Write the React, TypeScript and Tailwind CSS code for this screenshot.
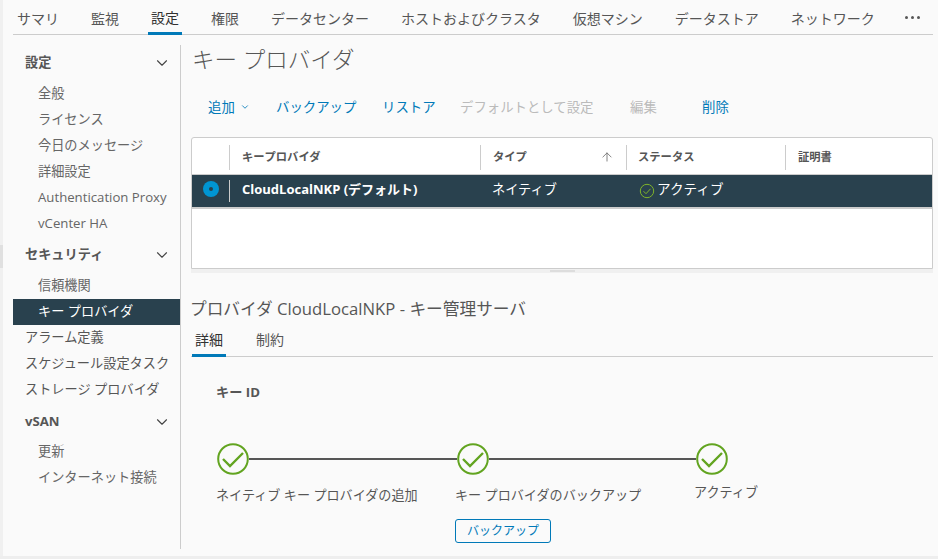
import React from "react";
import { ChevronDown, ArrowUp } from "lucide-react";

const tabs = ["サマリ", "監視", "設定", "権限", "データセンター", "ホストおよびクラスタ", "仮想マシン", "データストア", "ネットワーク"];

function StepIcon() {
  return (
    <svg width="32" height="32" viewBox="0 0 32 32" fill="none" className="shrink-0">
      <circle cx="16" cy="16" r="14.8" stroke="#62a420" strokeWidth="2" />
      <path d="M6 16 L13 23 L26 10" stroke="#62a420" strokeWidth="2.4" />
    </svg>
  );
}

function SideGroup({ title }: { title: string }) {
  return (
    <div className="h-[26px] flex items-center justify-between pl-[12px] pr-[9px] font-bold text-[#565656]">
      <span>{title}</span>
      <ChevronDown size={18} strokeWidth={1.5} className="text-[#444444]" />
    </div>
  );
}

function SideItem({ label, active }: { label: string; active?: boolean }) {
  return (
    <div className={"h-[26px] flex items-center pl-[25px] whitespace-nowrap " + (active ? "bg-[#29414e] text-white" : "text-[#666666]")}>
      {label}
    </div>
  );
}

function SideLink({ label }: { label: string }) {
  return <div className="h-[26px] flex items-center pl-[12px] whitespace-nowrap text-[#565656]">{label}</div>;
}

export default function App() {
  return (
    <div
      className="w-[938px] h-[559px] overflow-hidden bg-[#fafafa] flex flex-col text-[13.2px] text-[#565656]"
      style={{ fontFamily: '"Open Sans", "Noto Sans CJK JP", sans-serif' }}
    >
      <div className="flex-1 flex min-h-0">
        {/* left edge strip */}
        <div className="w-[3px] bg-[#f0f0f0] flex flex-col pt-[245px]">
          <div className="h-[23px] bg-[#e0e0e0]" />
        </div>

        <div className="w-[920px] ml-[10px] flex flex-col">
          {/* top tabs */}
          <div className="h-[35px] border-b border-[#cccccc] flex pl-[4px] gap-[32px] text-[14px] text-[#565656] shrink-0">
            {tabs.map((t) => (
              <div
                key={t}
                className={
                  "h-[35px] flex items-center whitespace-nowrap " +
                  (t === "設定" ? "border-b-[3px] border-[#0079b8] px-[3px] -mx-[3px] pt-[2px] text-[#313131]" : "pt-[1px]")
                }
              >
                {t}
              </div>
            ))}
            <div className="-ml-[2px] h-[35px] flex items-center gap-[3px] pb-[1px]">
              <span className="w-[3px] h-[3px] rounded-full bg-[#565656]" />
              <span className="w-[3px] h-[3px] rounded-full bg-[#565656]" />
              <span className="w-[3px] h-[3px] rounded-full bg-[#565656]" />
            </div>
          </div>

          <div className="flex flex-1 min-h-0 pt-[10px] pb-[7px]">
            {/* sidebar */}
            <div className="w-[168px] shrink-0 border-r border-[#cccccc] pt-[5px]">
              <SideGroup title="設定" />
              <div className="mt-[5px]">
                <SideItem label="全般" />
                <SideItem label="ライセンス" />
                <SideItem label="今日のメッセージ" />
                <SideItem label="詳細設定" />
                <SideItem label="Authentication Proxy" />
                <SideItem label="vCenter HA" />
              </div>
              <div className="mt-[5px]">
                <SideGroup title="セキュリティ" />
              </div>
              <div className="mt-[5px]">
                <SideItem label="信頼機関" />
                <SideItem label="キー プロバイダ" active />
              </div>
              <SideLink label="アラーム定義" />
              <SideLink label="スケジュール設定タスク" />
              <SideLink label="ストレージ プロバイダ" />
              <div className="mt-[6px]">
                <SideGroup title="vSAN" />
              </div>
              <div className="mt-[4px]">
                <SideItem label="更新" />
                <SideItem label="インターネット接続" />
              </div>
            </div>

            {/* main */}
            <div className="flex-1 min-w-0 pl-[10px] -mt-[10px]">
              <h1 className="text-[22.5px] leading-[32px] font-light text-[#565656] pl-[1px] mt-[9px] whitespace-nowrap">キー プロバイダ</h1>

              <div className="h-[20px] mt-[21px] flex items-center pl-[17px] whitespace-nowrap text-[13.4px]">
                <span className="text-[#0079b8] flex items-center gap-[5px] w-[68px]">
                  追加 <ChevronDown size={10} strokeWidth={2} />
                </span>
                <span className="text-[#0079b8] w-[106px]">バックアップ</span>
                <span className="text-[#0079b8] w-[78px]">リストア</span>
                <span className="text-[#bbbbbb] w-[170px]">デフォルトとして設定</span>
                <span className="text-[#bbbbbb] w-[72px]">編集</span>
                <span className="text-[#0079b8]">削除</span>
              </div>

              {/* providers table */}
              <div className="mt-[20px] h-[132px] bg-white border border-[#cccccc] rounded-t-[3px] w-[742px] flex flex-col">
                <div className="h-[36px] pt-[2px] shrink-0 grid grid-cols-[37px_251px_146px_159px_1fr] items-center font-semibold text-[11.3px] text-[#565656]">
                  <div />
                  <div className="h-[25px] border-l border-[#cccccc] pl-[12px] flex items-center [word-spacing:-3px]">キー プロバイダ</div>
                  <div className="h-[25px] border-l border-[#cccccc] pl-[12px] pr-[12px] flex items-center justify-between">
                    タイプ <ArrowUp size={14} strokeWidth={1.5} className="text-[#747474]" />
                  </div>
                  <div className="h-[25px] border-l border-[#cccccc] pl-[11px] flex items-center">ステータス</div>
                  <div className="h-[25px] border-l border-[#cccccc] pl-[12px] flex items-center">証明書</div>
                </div>
                <div className="h-[32px] shrink-0 border-t border-[#cccccc] border-b-2 border-b-[#cccccc] box-content bg-[#29414e] grid grid-cols-[37px_251px_146px_159px_1fr] items-center text-white">
                  <div className="flex justify-center -mt-[4px]">
                    <span className="w-[16px] h-[16px] rounded-full bg-[#0095d3] flex items-center justify-center">
                      <span className="w-[4px] h-[4px] rounded-full bg-[#29414e]" />
                    </span>
                  </div>
                  <div className="h-[22px] border-l border-[#cccccc] pl-[12px] pb-[3px] flex items-center font-bold whitespace-nowrap text-[13px]">CloudLocalNKP (デフォルト)</div>
                  <div className="pl-[12px] -mt-[3px]">ネイティブ</div>
                  <div className="pl-[13px] flex items-center gap-[2px] -mt-[3px] text-[13.6px]">
                    <svg width="16" height="16" viewBox="0 0 16 16" fill="none" className="mt-[3px]">
                      <circle cx="8" cy="8" r="6.7" stroke="#7fb32a" strokeWidth="1" />
                      <path d="M4.5 8.2 L7 10.7 L11.5 5.8" stroke="#7fb32a" strokeWidth="1" />
                    </svg>
                    アクティブ
                  </div>
                  <div />
                </div>
              </div>
              {/* splitter below table */}
              <div className="w-[742px] h-[4px] bg-[#f0f0f0] flex justify-center">
                <div className="w-[25px] h-[2px] mt-[1px] bg-[#dddddd]" />
              </div>

              <div className="text-[16.7px] leading-[24px] mt-[24px] -ml-[1px] whitespace-nowrap text-[#565656]">
                プロバイダ CloudLocalNKP - キー管理サーバ
              </div>

              <div className="h-[30px] mt-[6px] w-[742px] border-b border-[#cccccc] flex text-[14px] gap-[30px]">
                <div className="h-[30px] w-[34px] ml-[1px] text-center pt-[2px] border-b-[3px] border-[#0079b8] text-[#313131]">詳細</div>
                <div className="h-[30px] pt-[2px]">制約</div>
              </div>

              <div className="pl-[25px] mt-[25px] font-bold leading-[20px]">キー ID</div>

              {/* status stepper */}
              <div className="w-[511px] ml-[26px] mt-[41px] flex items-center">
                <StepIcon />
                <div className="flex-1 h-[2px] bg-[#565656]" />
                <StepIcon />
                <div className="flex-1 h-[2px] bg-[#565656]" />
                <StepIcon />
              </div>

              <div className="flex ml-[25px] mt-[11px] whitespace-nowrap text-[13.1px]">
                <div className="w-[239px]">ネイティブ キー プロバイダの追加</div>
                <div className="w-[239px]">
                  キー プロバイダのバックアップ
                  <div className="mt-[13px] w-[96px] h-[24px] border border-[#0079b8] rounded-[3px] flex items-center justify-center text-[12px] text-[#0079b8]">
                    バックアップ
                  </div>
                </div>
                <div className="-mt-[3px]">アクティブ</div>
              </div>
            </div>
          </div>
        </div>
      </div>
      <div className="h-[3px] bg-[#eeeeee] shrink-0" />
    </div>
  );
}
